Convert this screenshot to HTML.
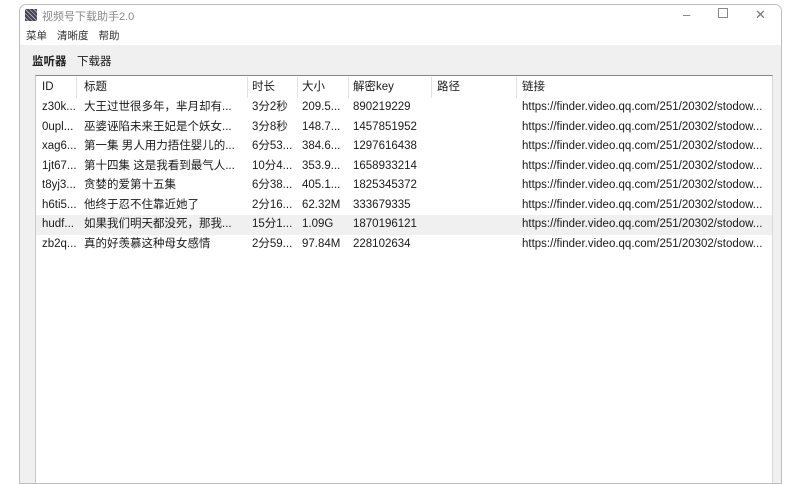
<!DOCTYPE html>
<html><head><meta charset="utf-8"><style>
*{margin:0;padding:0;box-sizing:border-box}
body{width:800px;height:477px;background:#fff;position:relative;overflow:hidden;font-family:"Liberation Sans","Noto Sans CJK SC",sans-serif;font-size:12px;color:#1a1a1a}
.win{position:absolute;left:19px;top:4px;width:763px;height:480px;border:1px solid #bdbdbd;border-radius:7px 7px 0 0;background:#f0f0f0;overflow:hidden}
.title{height:22px;background:#fff;position:relative}
.title .ic{position:absolute;left:5px;top:4px;width:12px;height:12px;background:repeating-linear-gradient(45deg,#445 0 2px,#aab 2px 3px)}
.title .t{position:absolute;left:22px;top:3px;font-size:11px;color:#888}
.ctl{position:absolute;top:2px;font-size:13px;color:#777}
.menu{height:18px;background:#fff;font-size:10.5px;color:#333;padding-left:6px;line-height:16px;padding-top:1px}
.menu span{margin-right:10px}
.tab{position:absolute;top:48px;font-size:11.5px}
.tbl{position:absolute;left:15px;top:70px;width:738px;height:420px;background:#fff;border-left:1px solid #c8c8c8;border-top:1px solid #888;border-right:1px solid #d8d8d8}
.row{position:absolute;left:0;height:19.5px;width:736px;line-height:19px;white-space:nowrap;font-size:11.5px}
.row span{position:absolute;top:0}
.hl{background:#f0f0f0}
.sep{position:absolute;top:1px;height:21px;width:1px;background:#e2e2e2}
</style></head><body>
<div class="win">
<div class="title"><div class="ic"></div><div class="t">视频号下载助手2.0</div>
<div class="ctl" style="left:663px">–</div><div class="ctl" style="left:698px;top:3px;width:10px;height:10px;border:1px solid #888"></div><div class="ctl" style="left:735px">✕</div></div>
<div class="menu"><span>菜单</span><span>清晰度</span><span>帮助</span></div>
<div class="tab" style="left:12px;font-weight:bold;color:#222">监听器</div><div class="tab" style="left:57px">下载器</div>
<div class="tbl">
<div class="sep" style="left:40px"></div><div class="sep" style="left:211px"></div><div class="sep" style="left:261px"></div><div class="sep" style="left:312px"></div><div class="sep" style="left:395px"></div><div class="sep" style="left:480px"></div>
<div class="row" style="top:2px"><span style="left:6px">ID</span><span style="left:48px">标题</span><span style="left:216px">时长</span><span style="left:266px">大小</span><span style="left:317px">解密key</span><span style="left:401px">路径</span><span style="left:486px">链接</span></div>
<div class="row" style="top:22px"><span style="left:6px">z30k...</span><span style="left:48px">大王过世很多年，芈月却有...</span><span style="left:216px">3分2秒</span><span style="left:266px">209.5...</span><span style="left:317px">890219229</span><span style="left:486px">https://finder.video.qq.com/251/20302/stodow...</span></div>
<div class="row" style="top:41.5px"><span style="left:6px">0upl...</span><span style="left:48px">巫婆诬陷未来王妃是个妖女...</span><span style="left:216px">3分8秒</span><span style="left:266px">148.7...</span><span style="left:317px">1457851952</span><span style="left:486px">https://finder.video.qq.com/251/20302/stodow...</span></div>
<div class="row" style="top:61px"><span style="left:6px">xag6...</span><span style="left:48px">第一集 男人用力捂住婴儿的...</span><span style="left:216px">6分53...</span><span style="left:266px">384.6...</span><span style="left:317px">1297616438</span><span style="left:486px">https://finder.video.qq.com/251/20302/stodow...</span></div>
<div class="row" style="top:80.5px"><span style="left:6px">1jt67...</span><span style="left:48px">第十四集  这是我看到最气人...</span><span style="left:216px">10分4...</span><span style="left:266px">353.9...</span><span style="left:317px">1658933214</span><span style="left:486px">https://finder.video.qq.com/251/20302/stodow...</span></div>
<div class="row" style="top:100px"><span style="left:6px">t8yj3...</span><span style="left:48px">贪婪的爱第十五集</span><span style="left:216px">6分38...</span><span style="left:266px">405.1...</span><span style="left:317px">1825345372</span><span style="left:486px">https://finder.video.qq.com/251/20302/stodow...</span></div>
<div class="row" style="top:119.5px"><span style="left:6px">h6ti5...</span><span style="left:48px">他终于忍不住靠近她了</span><span style="left:216px">2分16...</span><span style="left:266px">62.32M</span><span style="left:317px">333679335</span><span style="left:486px">https://finder.video.qq.com/251/20302/stodow...</span></div>
<div class="row hl" style="top:139px"><span style="left:6px">hudf...</span><span style="left:48px">如果我们明天都没死，那我...</span><span style="left:216px">15分1...</span><span style="left:266px">1.09G</span><span style="left:317px">1870196121</span><span style="left:486px">https://finder.video.qq.com/251/20302/stodow...</span></div>
<div class="row" style="top:158.5px"><span style="left:6px">zb2q...</span><span style="left:48px">真的好羡慕这种母女感情</span><span style="left:216px">2分59...</span><span style="left:266px">97.84M</span><span style="left:317px">228102634</span><span style="left:486px">https://finder.video.qq.com/251/20302/stodow...</span></div>
</div>
</div>
</body></html>
